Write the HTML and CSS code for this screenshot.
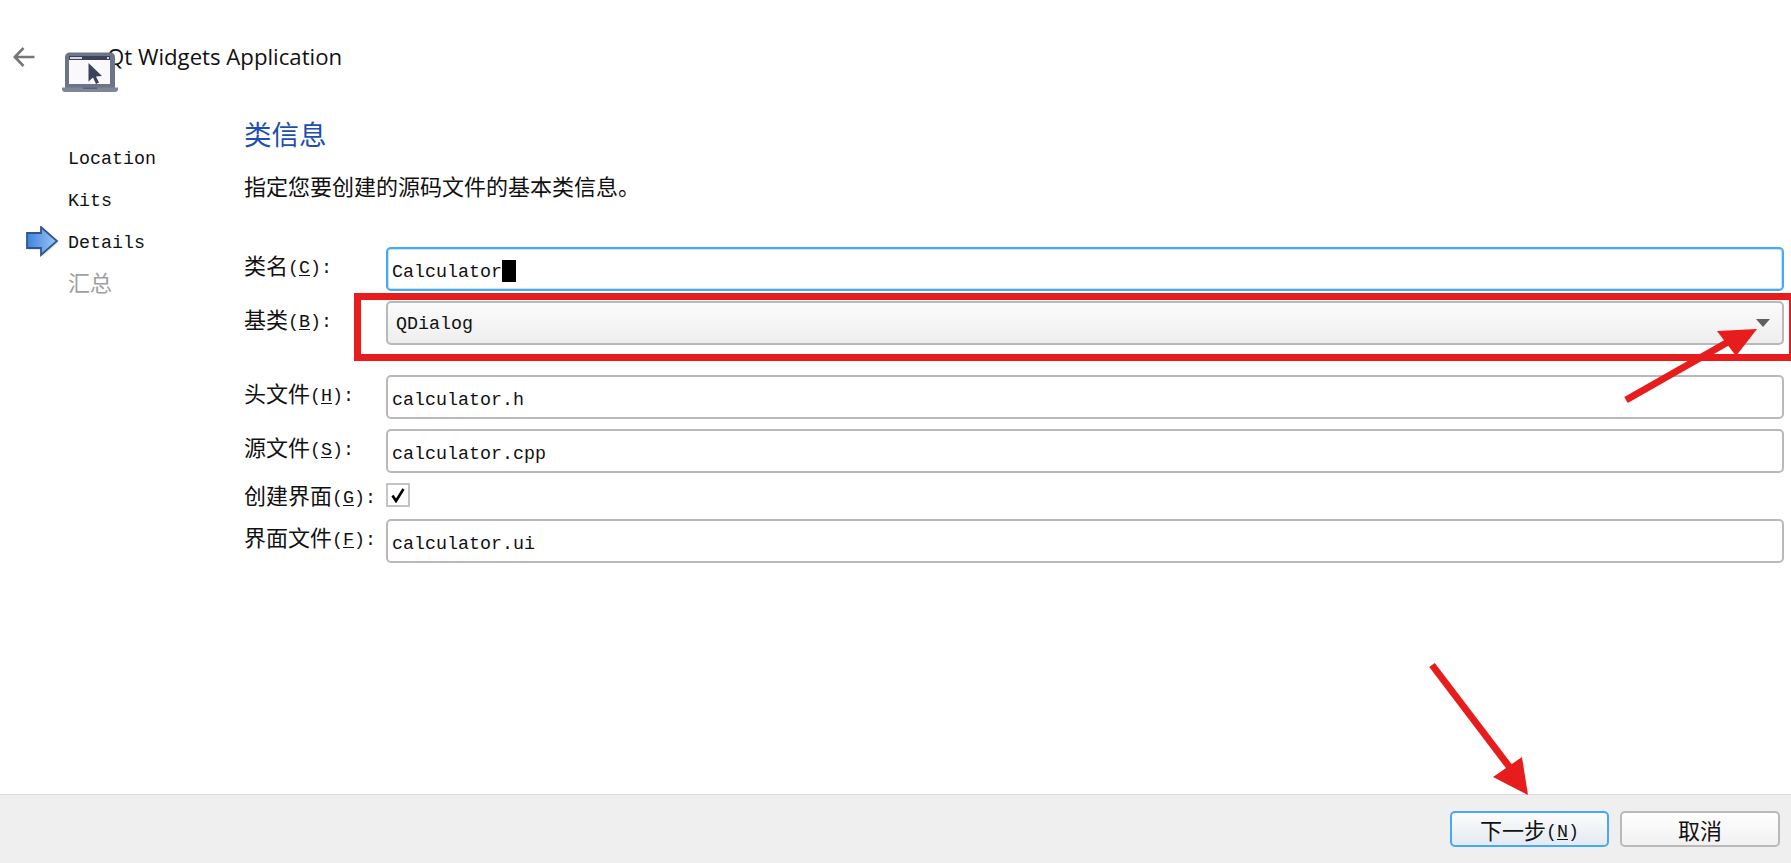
FILE: index.html
```html
<!DOCTYPE html>
<html lang="zh">
<head>
<meta charset="utf-8">
<title>Qt Widgets Application</title>
<link rel="stylesheet" href="styles.css">
</head>
<body>
<div class="wizard">
  <header class="topbar">
    <svg class="back" width="22" height="20" viewBox="0 0 22 20"><path d="M21.5 10H2M10.5 1 1.8 10l8.700 9" fill="none" stroke="#767676" stroke-width="2.600"/></svg>
    <div class="title">Qt Widgets Application</div>
    <svg class="laptop" width="56" height="40" viewBox="0 0 56 40">
      <path d="M3 5a4.500 4.500 0 0 1 4.500-4.500h41a4.500 4.500 0 0 1 4.500 4.500v31H3z" fill="#6d7488"/>
      <path d="M0 35.500h56v1.500a3 3 0 0 1-3 3H3a3 3 0 0 1-3-3z" fill="#80869a"/>
      <rect x="21" y="35.500" width="14" height="1.500" fill="#5a6074"/>
      <rect x="7" y="4" width="41" height="28" fill="#f9f9fb"/>
      <rect x="7" y="4" width="41" height="4" fill="#3c4259"/>
      <rect x="8" y="5" width="12" height="2" fill="#d5d7de"/>
      <rect x="45" y="5" width="2" height="2" fill="#d5d7de"/>
      <path d="M26.500 11v18.500l4.500-4 3 6.500 3-1.500-3-6 6-.5z" fill="#3c4259"/>
    </svg>
  </header>

  <div class="body">
    <nav class="steps">
      <div class="step">Location</div>
      <div class="step">Kits</div>
      <div class="step step-current">
        <svg class="step-arrow" width="34" height="32" viewBox="0 0 34 32">
          <defs><linearGradient id="ar" x1="0" x2="1" y1="0" y2="0"><stop offset="0" stop-color="#3f83e0"/><stop offset="1" stop-color="#9cc6f2"/></linearGradient></defs>
          <path d="M1 8h14V1l16 14-16 14v-7H1z" fill="#b9b9b9" opacity=".35" transform="translate(1 2)"/>
          <path d="M1 7h14V1l16 14-16 14v-7H1z" fill="url(#ar)" stroke="#2f5590" stroke-width="1.800"/>
        </svg>
        Details
      </div>
      <div class="step step-todo"><span class="cjk">汇总</span></div>
    </nav>

    <main class="content">
      <h1 class="heading">类信息</h1>
      <p class="intro">指定您要创建的源码文件的基本类信息。</p>
      <div class="form">
        <div class="label"><span class="cjk">类名</span>(<u>C</u>):</div>
        <div class="field field-focus">Calculator<span class="caret"></span></div>

        <div class="label"><span class="cjk">基类</span>(<u>B</u>):</div>
        <div class="field combo">QDialog<span class="combo-arrow"></span></div>

        <div class="label gap-top"><span class="cjk">头文件</span>(<u>H</u>):</div>
        <div class="field gap-top">calculator.h</div>

        <div class="label"><span class="cjk">源文件</span>(<u>S</u>):</div>
        <div class="field">calculator.cpp</div>

        <div class="label label-check"><span class="cjk">创建界面</span>(<u>G</u>):</div>
        <div class="check"><svg width="16" height="16" viewBox="0 0 16 16"><path d="M2.500 8.500 6 14 13.500 2" fill="none" stroke="#000" stroke-width="2.600"/></svg></div>

        <div class="label ui-row"><span class="cjk">界面文件</span>(<u>F</u>):</div>
        <div class="field ui-row">calculator.ui</div>
      </div>
    </main>
  </div>

  <footer class="footer">
    <button class="btn btn-default"><span class="cjk">下一步</span>(<u>N</u>)</button>
    <button class="btn"><span class="cjk">取消</span></button>
  </footer>

  <svg class="marks" width="1791" height="863" viewBox="0 0 1791 863">
    <path class="mark-box" d="M1792.500 296.500H357.500V357.500H1792.500z"/>
    <path class="mark-line" d="M1626 400 1735 338"/>
    <path class="mark-head" d="M1757 329 1717 331 1736 356z"/>
    <path class="mark-line" d="M1432 665 1511 769"/>
    <path class="mark-head" d="M1528 795 1522 757 1493 777z"/>
  </svg>
</div>
</body>
</html>
```

FILE: styles.css
```css
* { box-sizing: border-box; }
html, body { margin: 0; height: 100%; background: #fff; overflow: hidden; }
body {
  font-family: "Liberation Mono", "Noto Sans CJK SC", monospace;
  font-size: 18.33px;
  color: #111;
}
.cjk { font-family: "Noto Sans CJK SC", sans-serif; font-size: 22px; font-weight: 400; vertical-align: -1px; }
u { text-underline-offset: 2px; }

.wizard { position: relative; display: flex; flex-direction: column; width: 1791px; height: 863px; }

.topbar { position: relative; display: flex; align-items: center; height: 100px; padding: 14px 0 0 13px; flex: none; }
.back { flex: none; }
.title { margin-left: 72px; font-family: "Open Sans", sans-serif; font-size: 22.200px; line-height: 28px; color: #111; }
.laptop { position: absolute; left: 62px; top: 52px; }

.body { flex: 1; display: flex; min-height: 0; }
.steps { width: 244px; flex: none; padding: 39px 0 0 68px; }
.step { position: relative; height: 42px; line-height: 42px; }
.step-arrow { position: absolute; left: -42px; top: 3px; }
.step-todo { margin-top: -5px; color: #a0a0a0; }

.content { flex: 1; padding-right: 7px; }
.heading { margin: 15px 0 0; font-weight: 400; font-size: 27.500px; line-height: 36px; color: #1c4fb0; font-family: "Noto Sans CJK SC", sans-serif; }
.intro { margin: 19px 0 0; font-family: "Noto Sans CJK SC", sans-serif; font-size: 22px; line-height: 30px; }

.form { display: grid; grid-template-columns: 142px 1fr; row-gap: 10px; margin-top: 47px; }
.label { align-self: center; padding-bottom: 6px; line-height: 30px; white-space: nowrap; }
.label-check { align-self: start; height: 24px; padding-bottom: 0; line-height: 23px; }
.field {
  height: 44px; line-height: 32px; padding: 8px 0 0 4px;
  border: 2px solid #b9b9b9; border-radius: 5px; background: #fff;
  display: flex; align-items: center;
}
.field-focus { border-color: #45a9f5; box-shadow: inset 0 0 0 1px #c7e4fb; }
.caret { display: inline-block; width: 14px; height: 22px; margin-top: -4px; background: #000; }
.combo { position: relative; padding-left: 8px; padding-top: 4px; background: linear-gradient(#fbfbfb, #eeeeee); }
.combo-arrow {
  position: absolute; right: 12px; top: 16px; width: 0; height: 0;
  border-left: 7px solid transparent; border-right: 7px solid transparent; border-top: 8px solid #5f5f5f;
}
.gap-top { margin-top: 20px; }
.check {
  width: 24px; height: 24px; border: 2px solid #c4c4c4; background: #fff;
  display: flex; align-items: center; justify-content: center;
}
.ui-row { margin-top: 2px; }

.footer {
  flex: none; height: 69px; display: flex; justify-content: flex-end; gap: 11px;
  padding: 16px 11px 0 0; background: #efefef; border-top: 1px solid #d9d9d9;
}
.btn {
  width: 160px; height: 36px; padding: 0 0 6px; font: inherit; color: #111;
  border: 2px solid #b9b9b9; border-radius: 5px; background: linear-gradient(#ffffff, #f1f1f1);
}
.btn .cjk { vertical-align: -2px; }
.btn-default { width: 159px; border-color: #45a9f5; background: linear-gradient(#fbfcfd, #e4eaf1); }

.marks { position: absolute; left: 0; top: 0; pointer-events: none; }
.mark-box { fill: none; stroke: #e71d1d; stroke-width: 7; }
.mark-line { fill: none; stroke: #e71d1d; stroke-width: 7; }
.mark-head { fill: #e71d1d; }
```
